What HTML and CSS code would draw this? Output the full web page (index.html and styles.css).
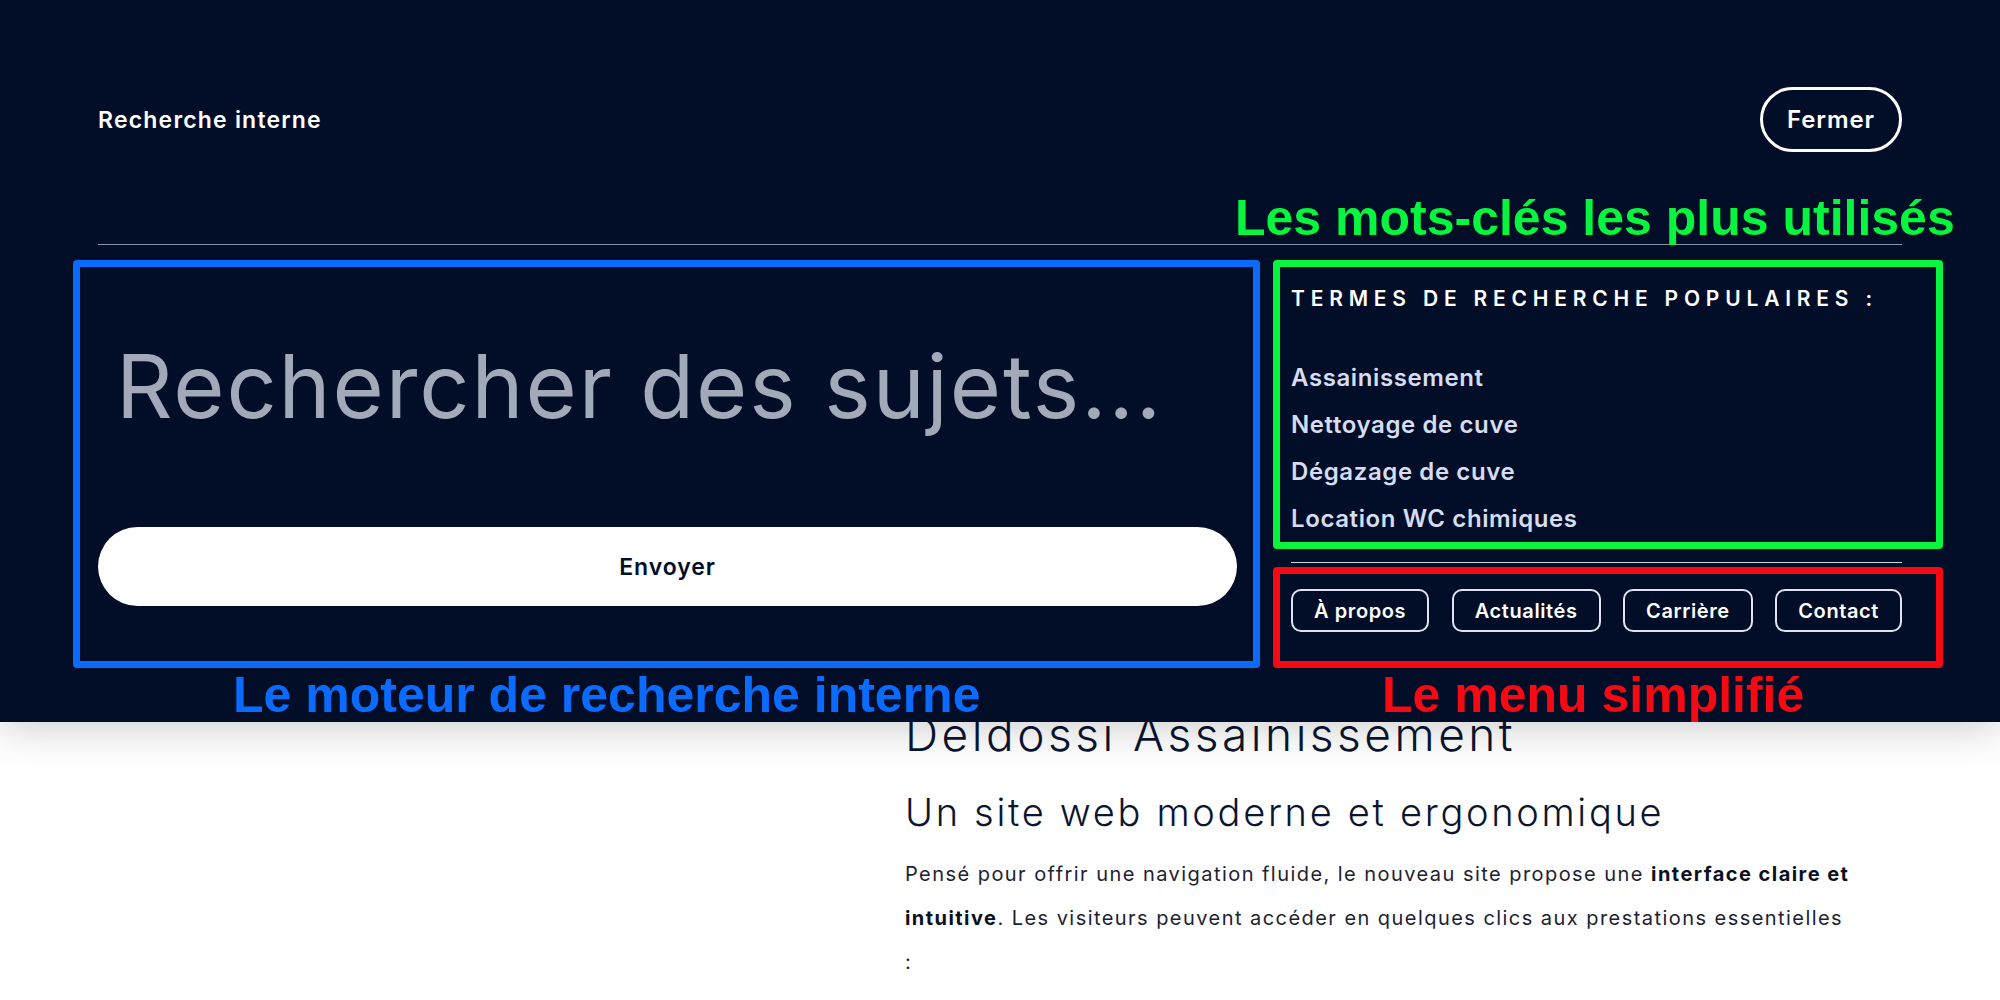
FILE: index.html
```html
<!DOCTYPE html>
<html lang="fr">
<head>
    <meta charset="UTF-8">
    <meta name="viewport" content="width=device-width, initial-scale=1.0">
    <title>Recherche interne</title>
    <link rel="stylesheet" href="styles.css">
</head>
<body>
    <main class="article">
        <h1>Deldossi Assainissement</h1>
        <h2>Un site web moderne et ergonomique</h2>
        <p>Pensé pour offrir une navigation fluide, le nouveau site propose une <strong>interface claire et intuitive</strong>. Les visiteurs peuvent accéder en quelques clics aux prestations essentielles :</p>
    </main>

    <div class="search-overlay">
        <div class="top-bar">
            <span class="top-title">Recherche interne</span>
            <button class="close-btn">Fermer</button>
        </div>
        <div class="rule"></div>

        <div class="search-area">
            <form class="search-form">
                <input class="search-input" type="text" placeholder="Rechercher des sujets...">
                <button class="send-btn" type="button">Envoyer</button>
            </form>

            <div class="side">
                <h3 class="popular-title">Termes de recherche populaires :</h3>
                <ul class="popular-list">
                    <li>Assainissement</li>
                    <li>Nettoyage de cuve</li>
                    <li>Dégazage de cuve</li>
                    <li>Location WC chimiques</li>
                </ul>
                <div class="side-rule"></div>
                <nav class="quick-menu">
                    <a href="#">À propos</a>
                    <a href="#">Actualités</a>
                    <a href="#">Carrière</a>
                    <a href="#">Contact</a>
                </nav>
            </div>
        </div>

        <!-- annotations -->
        <div class="mark mark-blue"></div>
        <div class="mark mark-green"></div>
        <div class="mark mark-red"></div>
        <span class="label label-green">Les mots-clés les plus utilisés</span>
        <span class="label label-blue">Le moteur de recherche interne</span>
        <span class="label label-red">Le menu simplifié</span>
    </div>
</body>
</html>
```

FILE: styles.css
```css
body {
    margin: 0;
    background: #fff;
    font-family: Inter, "Noto Sans", sans-serif;
    color: #0b1530;
    height: 1000px;
    overflow: hidden;
}

/* page behind the overlay */
.article {
    margin-left: 905px;
    padding-top: 707px;
    width: 1000px;
}
.article h1 {
    margin: 0;
    font-size: 46px;
    font-weight: 300;
    line-height: 54px;
    letter-spacing: 3.5px;
}
.article h2 {
    margin: 29px 0 0;
    font-size: 38px;
    font-weight: 300;
    line-height: 44px;
    letter-spacing: 2.7px;
}
.article p {
    margin: 18px 0 0;
    font-size: 20px;
    font-weight: 400;
    line-height: 44px;
    letter-spacing: 1.45px;
    color: #1c2233;
    width: 950px;
}
.article strong {
    font-weight: 700;
    color: #0b1020;
}

/* overlay */
.search-overlay {
    position: absolute;
    top: 0;
    left: 0;
    right: 0;
    height: 722px;
    box-sizing: border-box;
    padding: 87px 98px 0;
    background: #020d27;
    box-shadow: 0 6px 40px rgba(0, 0, 0, 0.2);
    color: #fff;
}
.top-bar {
    display: flex;
    justify-content: space-between;
    align-items: center;
    height: 65px;
}
.top-title {
    font-size: 23px;
    font-weight: 600;
    letter-spacing: 1.2px;
}
.close-btn {
    width: 142px;
    height: 65px;
    border: 3px solid #fff;
    border-radius: 40px;
    background: transparent;
    color: #fff;
    font-family: inherit;
    font-size: 24px;
    font-weight: 600;
    letter-spacing: 0.9px;
}
.rule {
    margin-top: 92px;
    border-top: 1px solid #8a92a6;
}

.search-area {
    display: flex;
    gap: 54px;
    margin-top: 39px;
}
.search-form {
    width: 1139px;
    display: flex;
    flex-direction: column;
}
.search-input {
    margin-top: 27px;
    height: 150px;
    padding: 0 18px;
    border: none;
    background: transparent;
    font-family: inherit;
    font-size: 88px;
    font-weight: 400;
    letter-spacing: 1.9px;
    color: #fff;
    outline: none;
}
.search-input::placeholder {
    color: #a2aab9;
}
.send-btn {
    margin-top: 66px;
    height: 79px;
    border: none;
    border-radius: 40px;
    background: #fff;
    color: #020d27;
    font-family: inherit;
    font-size: 23px;
    font-weight: 600;
    letter-spacing: 0.9px;
}

.side {
    width: 611px;
}
.popular-title {
    margin: 0;
    font-size: 21px;
    font-weight: 600;
    line-height: 30px;
    text-transform: uppercase;
    letter-spacing: 5.8px;
}
.popular-list {
    list-style: none;
    margin: 40px 0 0;
    padding: 0;
}
.popular-list li {
    font-size: 24px;
    font-weight: 600;
    line-height: 47px;
    letter-spacing: 0.6px;
    color: #d6ddf2;
}
.side-rule {
    margin-top: 20px;
    border-top: 1px solid #d0d6e4;
}
.quick-menu {
    display: flex;
    justify-content: space-between;
    margin-top: 26px;
}
.quick-menu a {
    display: flex;
    align-items: center;
    justify-content: center;
    height: 43px;
    box-sizing: border-box;
    padding: 0 21px;
    border: 2px solid #dfe4f0;
    border-radius: 10px;
    color: #fff;
    text-decoration: none;
    font-size: 20px;
    font-weight: 600;
    letter-spacing: 0.6px;
}

/* annotation frames and captions */
.mark {
    position: absolute;
    box-sizing: border-box;
    border: 7px solid;
    border-radius: 4px;
}
.mark-blue {
    left: 73px;
    top: 260px;
    width: 1187px;
    height: 408px;
    border-color: #0b6bff;
}
.mark-green {
    left: 1273px;
    top: 260px;
    width: 670px;
    height: 289px;
    border-color: #08f53f;
}
.mark-red {
    left: 1273px;
    top: 567px;
    width: 670px;
    height: 101px;
    border-color: #f50a14;
}
.label {
    position: absolute;
    font-family: "Liberation Sans", Arial, sans-serif;
    font-weight: 700;
    font-size: 50px;
    line-height: 40px;
    white-space: nowrap;
}
.label-green {
    left: 1235px;
    top: 198px;
    color: #08f53f;
}
.label-blue {
    left: 233px;
    top: 675px;
    color: #0b6bff;
}
.label-red {
    left: 1382px;
    top: 675px;
    color: #f50a14;
}
```
